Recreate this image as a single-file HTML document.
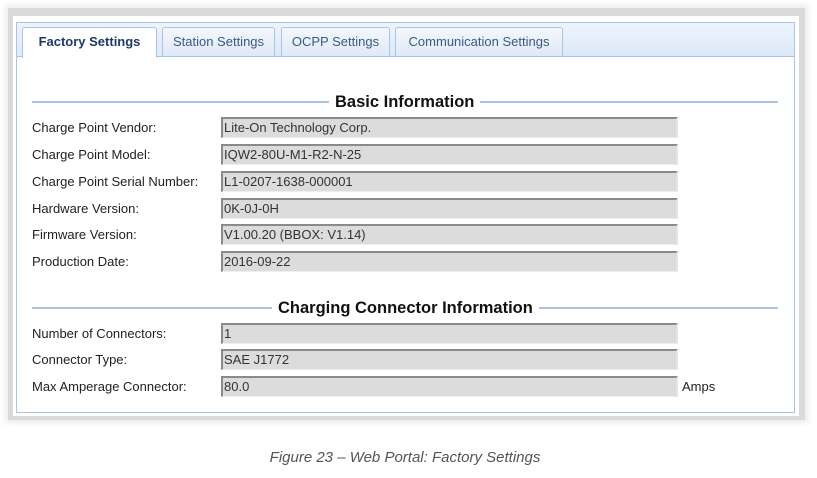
<!DOCTYPE html>
<html><head><style>
body{margin:0;width:817px;height:478px;background:#fff;position:relative;font-family:"Liberation Sans",sans-serif;overflow:hidden}
.shadow{position:absolute;left:8px;top:8px;width:797px;height:412px;background:#dadada;box-shadow:0 0 6px 3px #ececec}
.frame{position:absolute;left:13px;top:16px;width:786px;height:400px;background:#fff}
.panel{position:absolute;left:16px;top:22px;width:777px;height:389px;border:1px solid #a9c4e6;background:#fff}
.bar{position:absolute;left:0;top:0;width:777px;height:33px;background:linear-gradient(#eef4fc,#dde9f8);border-bottom:1px solid #a9c4e6}
.tab{position:absolute;top:4px;height:28px;border:1px solid #a9c4e6;border-bottom:none;border-radius:3px 3px 0 0;background:linear-gradient(#f4f8fd,#dfe9f6);color:#3a5a86;font-size:13px;line-height:28px;text-align:center}
.tab.a{background:#fff;color:#1d3a66;font-weight:bold;height:30px}
.rule{position:absolute;left:32px;width:746px;height:2px;background:#a9c4e6}
.title{position:absolute;background:#fff;padding:0 6px;font-weight:bold;font-size:16.5px;color:#111;line-height:18px}
.lbl{position:absolute;left:32px;font-size:13px;color:#222}
.inp{position:absolute;left:221px;width:452px;height:18px;background:#dcdcdc;border-top:2px solid #8a8a8a;border-left:2px solid #8a8a8a;border-right:2px solid #e4e4e4;border-bottom:1px solid #eee;font-size:13px;color:#333;line-height:18px;padding-left:1px}
.cap{position:absolute;top:449px;left:0;width:810px;text-align:center;font-style:italic;font-size:15px;color:#555}
</style></head><body>
<div class="shadow"></div><div class="frame"></div>
<div class="panel"><div class="bar"></div>
<div class="tab a" style="left:5px;width:133px">Factory Settings</div>
<div class="tab" style="left:145px;width:111px">Station Settings</div>
<div class="tab" style="left:264px;width:107px">OCPP Settings</div>
<div class="tab" style="left:378px;width:166px">Communication Settings</div>
</div>
<div class="rule" style="top:101px"></div>
<div class="title" style="top:93px;left:329px">Basic Information</div>
<div class="lbl" style="top:120px">Charge Point Vendor:</div><div class="inp" style="top:117px">Lite-On Technology Corp.</div>
<div class="lbl" style="top:147px">Charge Point Model:</div><div class="inp" style="top:144px">IQW2-80U-M1-R2-N-25</div>
<div class="lbl" style="top:174px">Charge Point Serial Number:</div><div class="inp" style="top:171px">L1-0207-1638-000001</div>
<div class="lbl" style="top:201px">Hardware Version:</div><div class="inp" style="top:198px">0K-0J-0H</div>
<div class="lbl" style="top:227px">Firmware Version:</div><div class="inp" style="top:224px">V1.00.20 (BBOX: V1.14)</div>
<div class="lbl" style="top:254px">Production Date:</div><div class="inp" style="top:251px">2016-09-22</div>
<div class="rule" style="top:307px"></div>
<div class="title" style="top:299px;left:272px">Charging Connector Information</div>
<div class="lbl" style="top:326px">Number of Connectors:</div><div class="inp" style="top:323px">1</div>
<div class="lbl" style="top:352px">Connector Type:</div><div class="inp" style="top:349px">SAE J1772</div>
<div class="lbl" style="top:379px">Max Amperage Connector:</div><div class="inp" style="top:376px">80.0</div>
<div class="lbl" style="top:379px;left:682px">Amps</div>
<div class="cap">Figure 23 – Web Portal: Factory Settings</div>
</body></html>
